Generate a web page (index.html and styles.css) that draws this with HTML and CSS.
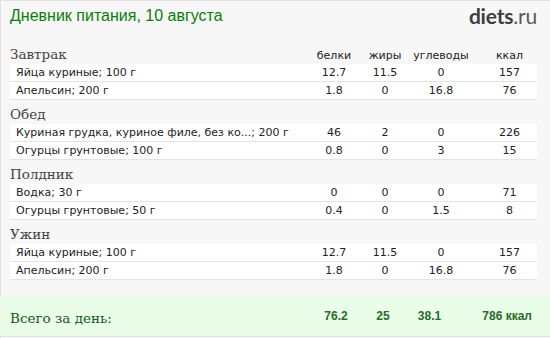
FILE: index.html
```html
<!DOCTYPE html>
<html lang="ru">
<head>
<meta charset="utf-8">
<title>Дневник питания</title>
<link rel="stylesheet" href="styles.css">
</head>
<body>
<div class="page">
  <header class="top">
    <h1 class="title">Дневник питания, 10 августа</h1>
    <div class="logo"><b>diets</b>.ru</div>
  </header>

  <section class="meal">
    <div class="meal-head"><span class="meal-name">Завтрак</span><span class="col">белки</span><span class="col">жиры</span><span class="col">углеводы</span><span class="col kcal">ккал</span></div>
    <div class="row"><span class="food">Яйца куриные; 100 г</span><span class="num">12.7</span><span class="num">11.5</span><span class="num">0</span><span class="num kcal">157</span></div>
    <div class="row"><span class="food">Апельсин; 200 г</span><span class="num">1.8</span><span class="num">0</span><span class="num">16.8</span><span class="num kcal">76</span></div>
  </section>

  <section class="meal">
    <div class="meal-head"><span class="meal-name">Обед</span></div>
    <div class="row"><span class="food">Куриная грудка, куриное филе, без ко...; 200 г</span><span class="num">46</span><span class="num">2</span><span class="num">0</span><span class="num kcal">226</span></div>
    <div class="row"><span class="food">Огурцы грунтовые; 100 г</span><span class="num">0.8</span><span class="num">0</span><span class="num">3</span><span class="num kcal">15</span></div>
  </section>

  <section class="meal">
    <div class="meal-head"><span class="meal-name">Полдник</span></div>
    <div class="row"><span class="food">Водка; 30 г</span><span class="num">0</span><span class="num">0</span><span class="num">0</span><span class="num kcal">71</span></div>
    <div class="row"><span class="food">Огурцы грунтовые; 50 г</span><span class="num">0.4</span><span class="num">0</span><span class="num">1.5</span><span class="num kcal">8</span></div>
  </section>

  <section class="meal">
    <div class="meal-head"><span class="meal-name">Ужин</span></div>
    <div class="row"><span class="food">Яйца куриные; 100 г</span><span class="num">12.7</span><span class="num">11.5</span><span class="num">0</span><span class="num kcal">157</span></div>
    <div class="row"><span class="food">Апельсин; 200 г</span><span class="num">1.8</span><span class="num">0</span><span class="num">16.8</span><span class="num kcal">76</span></div>
  </section>

  <div class="total">
    <span class="total-label">Всего за день:</span>
    <span class="tnum">76.2</span>
    <span class="tnum">25</span>
    <span class="tnum">38.1</span>
    <span class="tnum tkcal">786 ккал</span>
  </div>
</div>
</body>
</html>
```

FILE: styles.css
```css
html, body {
  margin: 0;
  padding: 0;
  background: #f7f7f7;
}

.page {
  width: 550px;
  height: 338px;
  overflow: hidden;
  background: #f7f7f7;
  box-shadow: inset 1px 1px 0 #e2e2e2;
}

.top {
  display: flex;
  justify-content: space-between;
  align-items: flex-start;
  height: 40px;
  padding: 0 13px 0 10px;
  box-sizing: border-box;
}

.title {
  margin: 0;
  padding-top: 7px;
  font: normal 16px/18px "Liberation Sans", Arial, sans-serif;
  color: #0b7d0b;
}

.logo {
  padding-top: 4px;
  font: normal 21px/24px Lato, "Open Sans", sans-serif;
  color: #5a5a5a;
  letter-spacing: -0.2px;
}

.logo b {
  font-weight: 700;
  color: #3f3f3f;
}

.meal-head,
.row {
  display: grid;
  grid-template-columns: 299px 50px 52px 60px 66px;
  margin-left: 10px;
  width: 527px;
}

.meal-head {
  height: 24px;
  align-items: baseline;
}

.meal-name {
  padding-top: 4px;
  font: normal 13.5px/20px "DejaVu Serif", "Liberation Serif", serif;
  color: #444;
}

.col {
  text-align: center;
  font: normal 11px/14px "DejaVu Sans", Verdana, sans-serif;
  color: #222;
}

.kcal {
  padding-left: 11px;
}

.row {
  height: 17px;
  background: #fff;
  border-bottom: 1px solid #e4e4e4;
  align-items: center;
  font: normal 11px/17px "DejaVu Sans", Verdana, sans-serif;
  color: #222;
}

.food {
  padding-left: 6px;
  white-space: nowrap;
  overflow: hidden;
}

.num {
  text-align: center;
}

.total {
  display: grid;
  grid-template-columns: 302px 48px 46px 47px 79px;
  margin-top: 16px;
  padding: 0 18px 0 10px;
  height: 40px;
  background: #e9fde9;
  border-bottom: 1px solid #dde3dd;
  align-items: center;
}

.total-label {
  font: normal 13.5px/20px "DejaVu Serif", "Liberation Serif", serif;
  color: #145a14;
  padding-top: 3px;
}

.tnum {
  text-align: center;
  font: bold 12px/16px "Liberation Sans", Arial, sans-serif;
  color: #2b6a2b;
}

.tkcal {
  text-align: right;
}
```
